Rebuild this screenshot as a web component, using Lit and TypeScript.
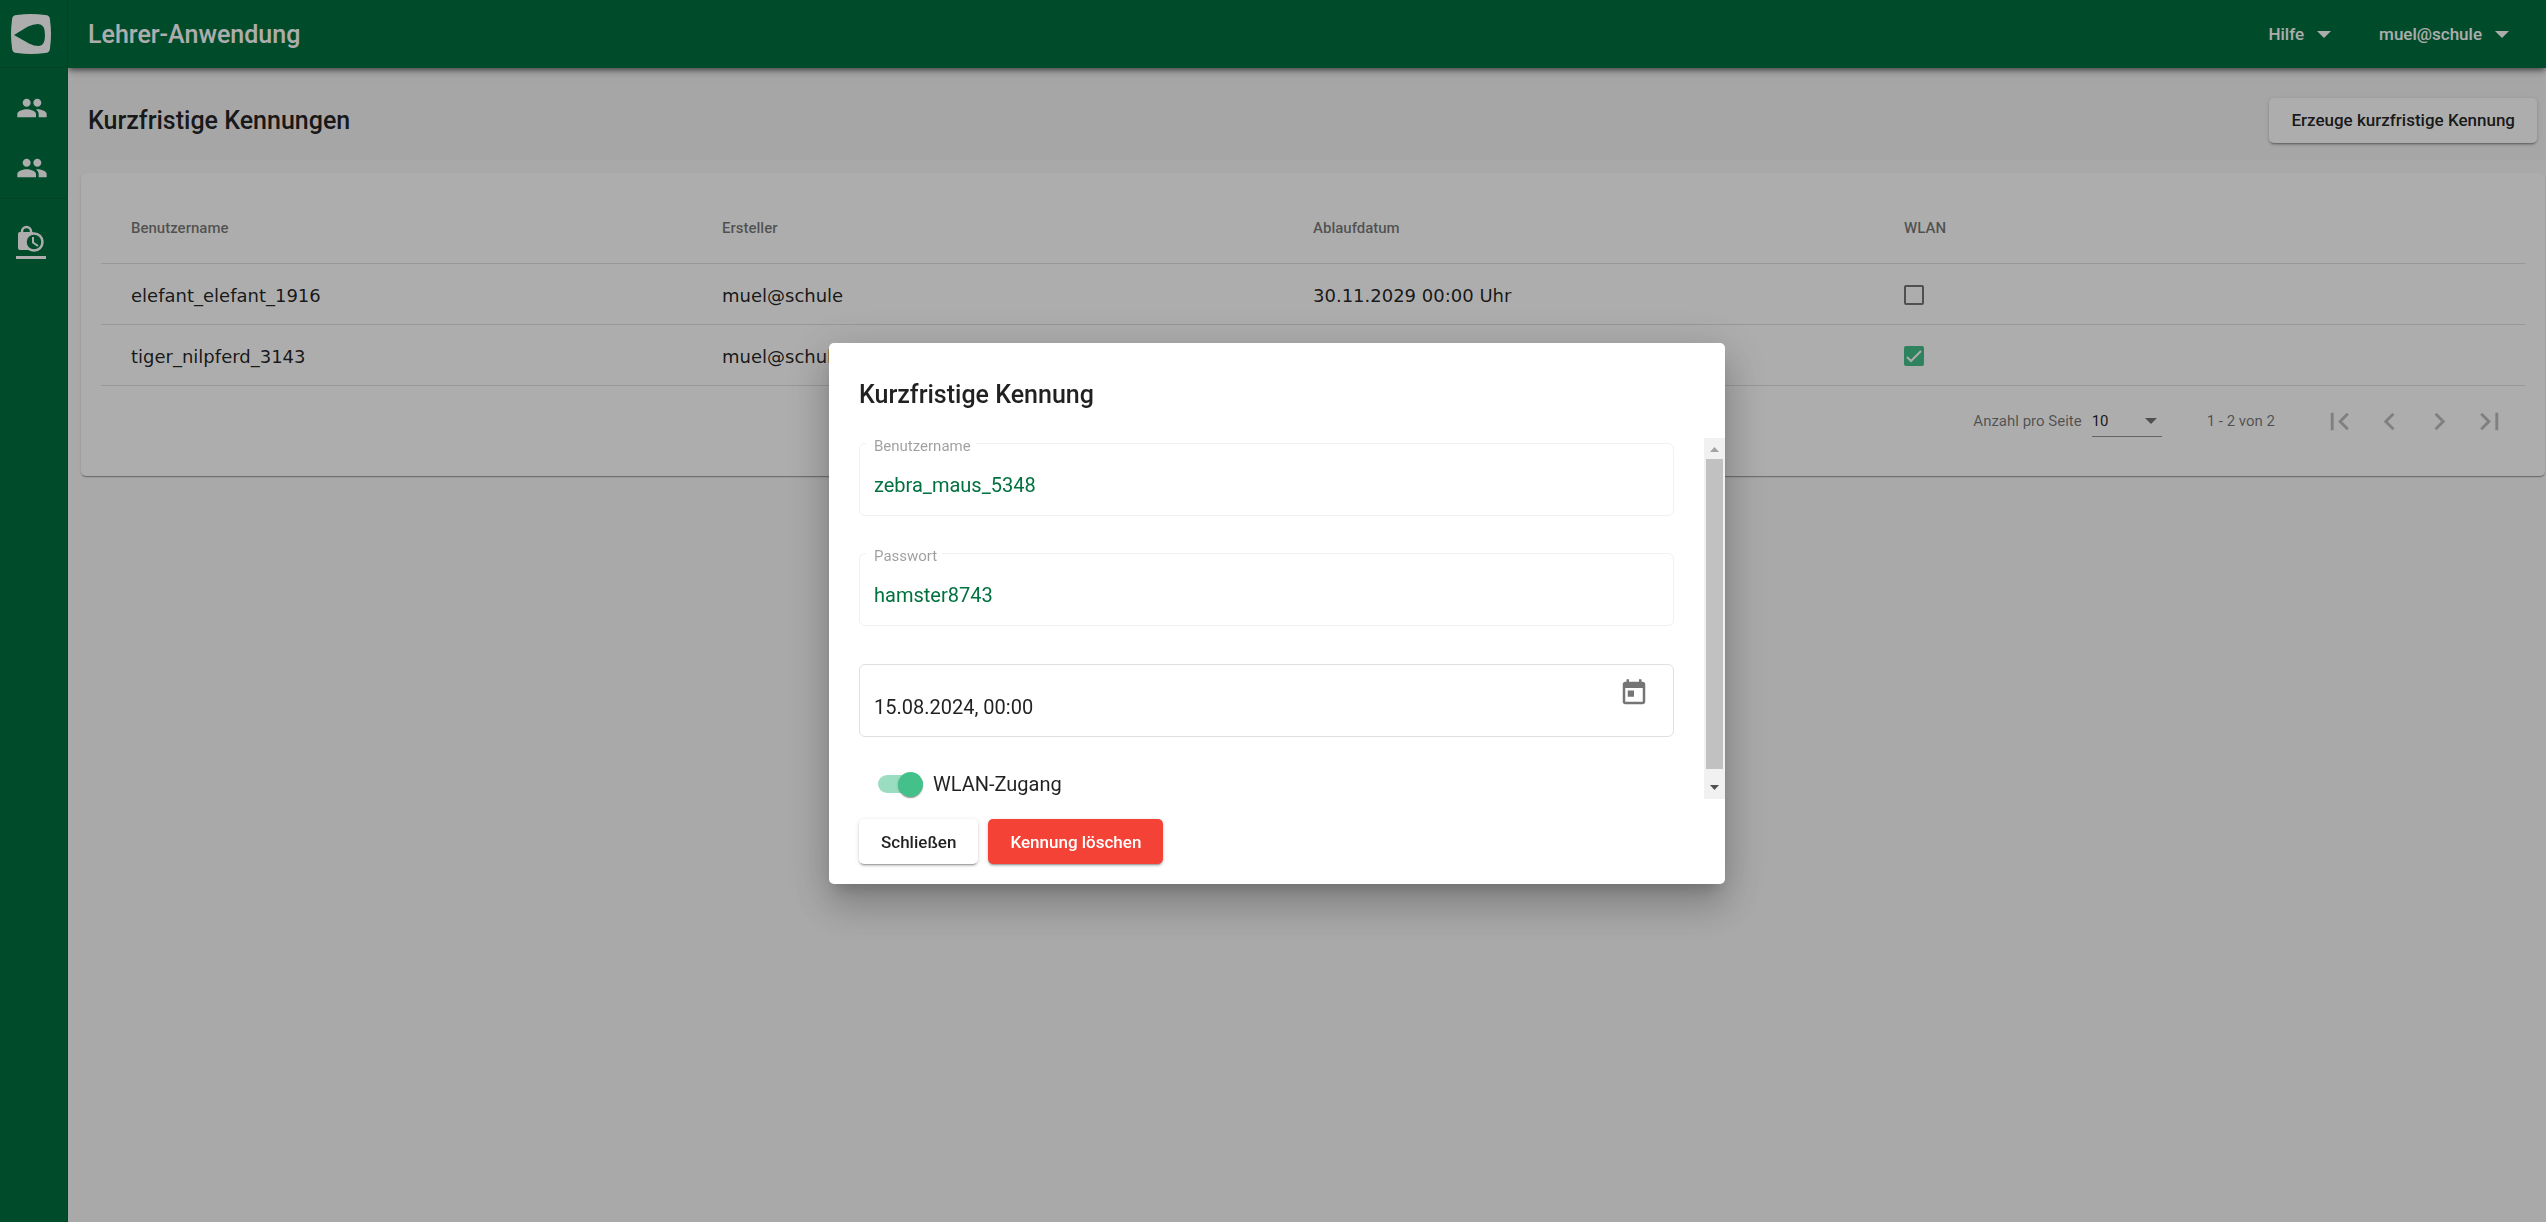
import { LitElement, html, css } from "lit";
import { customElement } from "lit/decorators.js";

interface Account {
  user: string;
  owner: string;
  expires: string;
  wlan: boolean;
}

const accounts: Account[] = [
  { user: "elefant_elefant_1916", owner: "muel@schule", expires: "30.11.2029 00:00 Uhr", wlan: false },
  { user: "tiger_nilpferd_3143", owner: "muel@schule", expires: "30.11.2029 00:00 Uhr", wlan: true },
];

const groupIcon = html`<svg class="icon" viewBox="0 0 24 24" width="32" height="32" aria-hidden="true">
  <path fill="currentColor" d="M16 11c1.66 0 2.99-1.34 2.99-3S17.66 5 16 5c-1.66 0-3 1.34-3 3s1.340 3 3 3zm-8 0c1.66 0 2.99-1.34 2.99-3S9.66 5 8 5C6.340 5 5 6.340 5 8s1.340 3 3 3zm0 2c-2.330 0-7 1.170-7 3.500V19h14v-2.500c0-2.330-4.670-3.500-7-3.500zm8 0c-.29 0-.62.02-.97.05 1.160.84 1.970 1.970 1.970 3.450V19h6v-2.500c0-2.330-4.670-3.500-7-3.500z"/>
</svg>`;

const pagerPaths: [string, string][] = [
  ["Erste Seite", "M18.41 16.59L13.820 12l4.590-4.590L17 6l-6 6 6 6zM6 6h2v12H6z"],
  ["Vorherige Seite", "M15.41 7.41L14 6l-6 6 6 6 1.410-1.410L10.830 12z"],
  ["Nächste Seite", "M10 6L8.590 7.410 13.170 12l-4.580 4.590L10 18l6-6z"],
  ["Letzte Seite", "M5.590 7.410L10.180 12l-4.590 4.590L7 18l6-6-6-6zM16 6h2v12h-2z"],
];

@customElement("app-root")
export class AppRoot extends LitElement {
  static styles = css`
    :host {
      display: block;
      font-family: Roboto, sans-serif;
      color: rgba(0, 0, 0, 0.87);
      --green: #00713f;
      --mint: #44c08a;
    }
    * { box-sizing: border-box; }
    button, input, select { font: inherit; color: inherit; margin: 0; }
    button { cursor: pointer; }
    h1, h2 { margin: 0; padding-top: 2px; font-size: 25px; font-weight: 500; line-height: 32px; }
    svg { display: block; }

    .app {
      display: grid;
      grid-template-columns: 68px minmax(0, 1fr);
      min-height: 100vh;
      background: #fafafa;
    }
    .side {
      background: var(--green);
      color: #fff;
      border-right: 1px solid rgba(0, 0, 0, 0.12);
      z-index: 2;
    }
    .brand {
      display: flex;
      height: 68px;
      align-items: center;
      padding-left: 11px;
      border-bottom: 1px solid rgba(0, 0, 0, 0.12);
    }
    .nav { display: flex; flex-direction: column; align-items: stretch; }
    .nav a {
      display: flex;
      height: 60px;
      align-items: center;
      padding-left: 16px;
      color: #fff;
    }
    .group { padding-top: 10px; border-bottom: 1px solid rgba(0, 0, 0, 0.12); }
    .nav .active {
      flex-direction: column;
      align-items: flex-start;
      justify-content: flex-end;
      gap: 3px;
    }
    .bar { width: 30px; height: 3px; background: #fff; }

    .page { display: flex; flex-direction: column; min-width: 0; }
    .toolbar {
      display: flex;
      align-items: center;
      gap: 48px;
      height: 68px;
      padding: 0 37px 0 20px;
      background: var(--green);
      color: #fff;
      box-shadow: 0 3px 5px -1px rgba(0, 0, 0, 0.5), 0 6px 10px 0 rgba(0, 0, 0, 0.14);
      z-index: 1;
    }
    .app-title { flex: 1; }
    .menu {
      display: flex;
      align-items: center;
      gap: 13px;
      border: 0;
      padding: 0;
      background: none;
      font-size: 17px;
      font-weight: 500;
    }
    .heading {
      display: flex;
      justify-content: space-between;
      align-items: center;
      height: 80px;
      margin-top: 12px;
      padding: 0 9px 0 20px;
      background: #f5f5f5;
    }
    .raised {
      height: 45px;
      padding: 0 22px;
      border: 0;
      border-radius: 5px;
      background: #fff;
      font-size: 17px;
      font-weight: 500;
      box-shadow: 0 3px 1px -2px rgba(0, 0, 0, 0.2), 0 2px 2px 0 rgba(0, 0, 0, 0.14), 0 1px 5px 0 rgba(0, 0, 0, 0.12);
    }
    .card {
      margin: 13px 1px 0 13px;
      padding: 20px;
      border-radius: 5px;
      background: #fff;
      box-shadow: 0 2px 1px -1px rgba(0, 0, 0, 0.2), 0 1px 1px 0 rgba(0, 0, 0, 0.14), 0 1px 3px 0 rgba(0, 0, 0, 0.12);
    }
    .table { display: block; }
    .table thead, .table tbody { display: block; }
    .table tr {
      display: grid;
      grid-template-columns: repeat(4, 1fr);
      align-items: center;
      height: 61px;
      padding: 2px 30px 0;
      border-bottom: 1px solid rgba(0, 0, 0, 0.12);
    }
    .table thead tr { height: 71px; padding-top: 0; }
    .table th {
      padding: 0;
      text-align: left;
      font-size: 15px;
      font-weight: 500;
      color: rgba(0, 0, 0, 0.54);
    }
    .table td { padding: 0; font-family: "DejaVu Sans", Verdana, sans-serif; font-size: 18px; }
    .check {
      display: block;
      appearance: none;
      width: 20px;
      height: 20px;
      border: 2px solid rgba(0, 0, 0, 0.54);
      border-radius: 2px;
    }
    .check:checked { border: 0; background: var(--mint); }
    .check-box { display: grid; width: 20px; }
    .check-box > * { grid-area: 1 / 1; }
    .check-box svg { pointer-events: none; }
    .pager {
      display: flex;
      justify-content: flex-end;
      align-items: center;
      height: 70px;
      padding-right: 11px;
      font-size: 15px;
      color: rgba(0, 0, 0, 0.54);
    }
    .per-page { display: flex; align-items: center; gap: 10px; }
    .select-wrap {
      display: grid;
      align-items: center;
      width: 70px;
      height: 32px;
      border-bottom: 1px solid rgba(0, 0, 0, 0.42);
    }
    .select-wrap > * { grid-area: 1 / 1; }
    .select-wrap svg { justify-self: end; margin-right: 5px; pointer-events: none; }
    .select-wrap select {
      appearance: none;
      border: 0;
      padding: 0;
      background: none;
      color: rgba(0, 0, 0, 0.87);
    }
    .range { margin: 0 39px 0 45px; }
    .pager button {
      display: grid;
      place-items: center;
      width: 50px;
      height: 50px;
      padding: 0;
      border: 0;
      background: none;
      color: rgba(0, 0, 0, 0.26);
    }

    .overlay {
      position: fixed;
      inset: 0;
      z-index: 10;
      display: grid;
      place-items: center;
      padding: 5px 0 0 8px;
      background: rgba(0, 0, 0, 0.32);
    }
    .dialog {
      display: flex;
      flex-direction: column;
      width: 896px;
      max-width: 90vw;
      padding: 34px 0 20px 30px;
      border-radius: 5px;
      background: #fff;
      box-shadow: 0 11px 15px -7px rgba(0, 0, 0, 0.2), 0 24px 38px 3px rgba(0, 0, 0, 0.14), 0 9px 46px 8px rgba(0, 0, 0, 0.12);
    }
    .dialog h2 { margin-bottom: 27px; }
    .scroller { display: flex; height: 361px; overflow: hidden; }
    .fields { flex: 1; padding-right: 30px; }
    .field {
      display: grid;
      margin: 0 0 32px;
      height: 78px;
      padding: 6px 14px 0;
      border: 1px solid #e0e0e0;
      border-radius: 6px;
      align-items: center;
    }
    .field.off { border-color: #f0f0f0; }
    .field legend {
      height: 10px;
      margin-left: -8px;
      padding: 0 5px 0 8px;
      font-size: 15px;
      line-height: 16px;
      color: rgba(0, 0, 0, 0.38);
    }
    .field input {
      width: 100%;
      min-width: 0;
      border: 0;
      padding: 0;
      outline: 0;
      background: none;
      font-size: 20px;
      line-height: 24px;
      color: rgba(0, 0, 0, 0.87);
    }
    .off input { color: var(--green); }
    .field.date { display: flex; height: 73px; margin-top: 38px; padding-top: 0; }
    .field.date input { padding-top: 12px; }
    .date button { padding: 0 10px 16px 0; border: 0; background: none; color: #757575; }
    .toggle { display: flex; align-items: center; gap: 10px; margin: 35px 0 0 19px; font-size: 20px; line-height: 24px; }
    .switch {
      appearance: none;
      display: flex;
      align-items: center;
      justify-content: flex-end;
      width: 45px;
      height: 18px;
      border-radius: 9px;
      background: rgba(68, 192, 138, 0.54);
    }
    .switch::before {
      content: "";
      width: 25px;
      height: 25px;
      flex: none;
      border-radius: 50%;
      background: var(--mint);
      box-shadow: 0 2px 1px -1px rgba(0, 0, 0, 0.2), 0 1px 1px 0 rgba(0, 0, 0, 0.14), 0 1px 3px 0 rgba(0, 0, 0, 0.12);
    }
    .scrollbar {
      display: flex;
      flex-direction: column;
      align-items: center;
      justify-content: space-between;
      width: 21px;
      padding: 9px 2px;
      background: #f1f1f1;
    }
    .thumb { width: 17px; height: 310px; margin-bottom: 9px; background: #c1c1c1; }
    .actions { display: flex; gap: 10px; padding-top: 20px; }
    .danger { background: #f44336; color: #fff; }
  `;

  render() {
    return html`
      <div class="app">
        <aside class="side">
          <div class="brand">
            <svg viewBox="0 0 40 40" width="40" height="40" role="img" aria-label="Logo">
              <path fill="#fff" d="M6 1Q20-1 34 1Q39 1 39 6Q41 20 39 34Q39 39 34 39Q20 41 6 39Q1 39 1 34Q-1 20 1 6Q1 1 6 1z"/>
              <path fill="#00713f" d="M3 21L17 12.500Q22 10 27 10Q34 10 34 21Q34 32 28 32Q23 32 18 29.500z"/>
            </svg>
          </div>
          <nav class="nav" aria-label="Hauptmenü">
            <div class="group">
              <a href="#klassen" aria-label="Klassen">${groupIcon}</a>
              <a href="#gruppen" aria-label="Gruppen">${groupIcon}</a>
            </div>
            <a class="active" href="#kennungen" aria-label="Kurzfristige Kennungen">
              <svg viewBox="0 0 30 28" width="30" height="28" aria-hidden="true">
                <path fill="none" stroke="#fff" stroke-width="2.500" d="M6 9V6.500a4.500 4.500 0 0 1 9 0V9"/>
                <path fill="#fff" d="M4 7h13v18H4a2 2 0 0 1-2-2V9a2 2 0 0 1 2-2z"/>
                <circle cx="18" cy="17" r="8.500" fill="#00713f" stroke="#fff" stroke-width="2.500"/>
                <path fill="none" stroke="#fff" stroke-width="2" d="M17 12v5.500l5 3.500"/>
              </svg>
              <span class="bar"></span>
            </a>
          </nav>
        </aside>
        <div class="page">
          <header class="toolbar">
            <h1 class="app-title">Lehrer-Anwendung</h1>
            <button class="menu">Hilfe ${this.caret(14)}</button>
            <button class="menu">muel@schule ${this.caret(14)}</button>
          </header>
          <main>
            <div class="heading">
              <h2>Kurzfristige Kennungen</h2>
              <button class="raised">Erzeuge kurzfristige Kennung</button>
            </div>
            <section class="card">
              <table class="table">
                <thead>
                  <tr><th>Benutzername</th><th>Ersteller</th><th>Ablaufdatum</th><th>WLAN</th></tr>
                </thead>
                <tbody>
                  ${accounts.map((a) => html`<tr>
                    <td>${a.user}</td>
                    <td>${a.owner}</td>
                    <td>${a.expires}</td>
                    <td>
                      <span class="check-box">
                        <input class="check" type="checkbox" aria-label="WLAN für ${a.user}" .checked=${a.wlan} />
                        ${a.wlan
                          ? html`<svg viewBox="0 0 20 20" width="20" height="20" aria-hidden="true"><path fill="none" stroke="#fff" stroke-width="2" d="M3 11l4 4L17 5"/></svg>`
                          : ""}
                      </span>
                    </td>
                  </tr>`)}
                </tbody>
              </table>
              <div class="pager">
                <label class="per-page">Anzahl pro Seite
                  <span class="select-wrap">
                    <select><option>10</option></select>
                    ${this.caret(12)}
                  </span>
                </label>
                <span class="range">1 - 2 von 2</span>
                ${pagerPaths.map(([label, d]) => html`<button disabled aria-label=${label}>
                  <svg viewBox="0 0 24 24" width="35" height="35"><path fill="currentColor" d=${d} /></svg>
                </button>`)}
              </div>
            </section>
          </main>
        </div>
      </div>
      <div class="overlay">
        <div class="dialog" role="dialog" aria-modal="true" aria-labelledby="dialog-title">
          <h2 id="dialog-title">Kurzfristige Kennung</h2>
          <div class="scroller">
            <div class="fields">
              <fieldset class="field off">
                <legend><label for="user">Benutzername</label></legend>
                <input id="user" readonly value="zebra_maus_5348" />
              </fieldset>
              <fieldset class="field off">
                <legend><label for="pass">Passwort</label></legend>
                <input id="pass" readonly value="hamster8743" />
              </fieldset>
              <div class="field date">
                <input aria-label="Ablaufdatum" value="15.08.2024, 00:00" />
                <button aria-label="Kalender öffnen">
                  <svg viewBox="0 0 24 24" width="30" height="30"><path fill="currentColor" d="M19 3h-1V1h-2v2H8V1H6v2H5c-1.110 0-1.990.9-1.990 2L3 19c0 1.100.89 2 2 2h14c1.100 0 2-.9 2-2V5c0-1.100-.9-2-2-2zm0 16H5V8h14v11zM7 10h5v5H7z"/></svg>
                </button>
              </div>
              <label class="toggle"><input class="switch" type="checkbox" role="switch" .checked=${true} />WLAN-Zugang</label>
            </div>
            <div class="scrollbar" aria-hidden="true">
              <svg viewBox="0 0 9 5" width="9" height="5"><path fill="#a3a3a3" d="M0 5L4.500 0L9 5z"/></svg>
              <div class="thumb"></div>
              <svg viewBox="0 0 9 5" width="9" height="5"><path fill="#505050" d="M0 0h9L4.500 5z"/></svg>
            </div>
          </div>
          <div class="actions">
            <button class="raised">Schließen</button>
            <button class="raised danger">Kennung löschen</button>
          </div>
        </div>
      </div>
    `;
  }

  private caret(width: number) {
    return html`<svg viewBox="0 0 12 6" width=${width} height=${width / 2} aria-hidden="true"><path fill="currentColor" d="M0 0h12L6 6z"/></svg>`;
  }
}
